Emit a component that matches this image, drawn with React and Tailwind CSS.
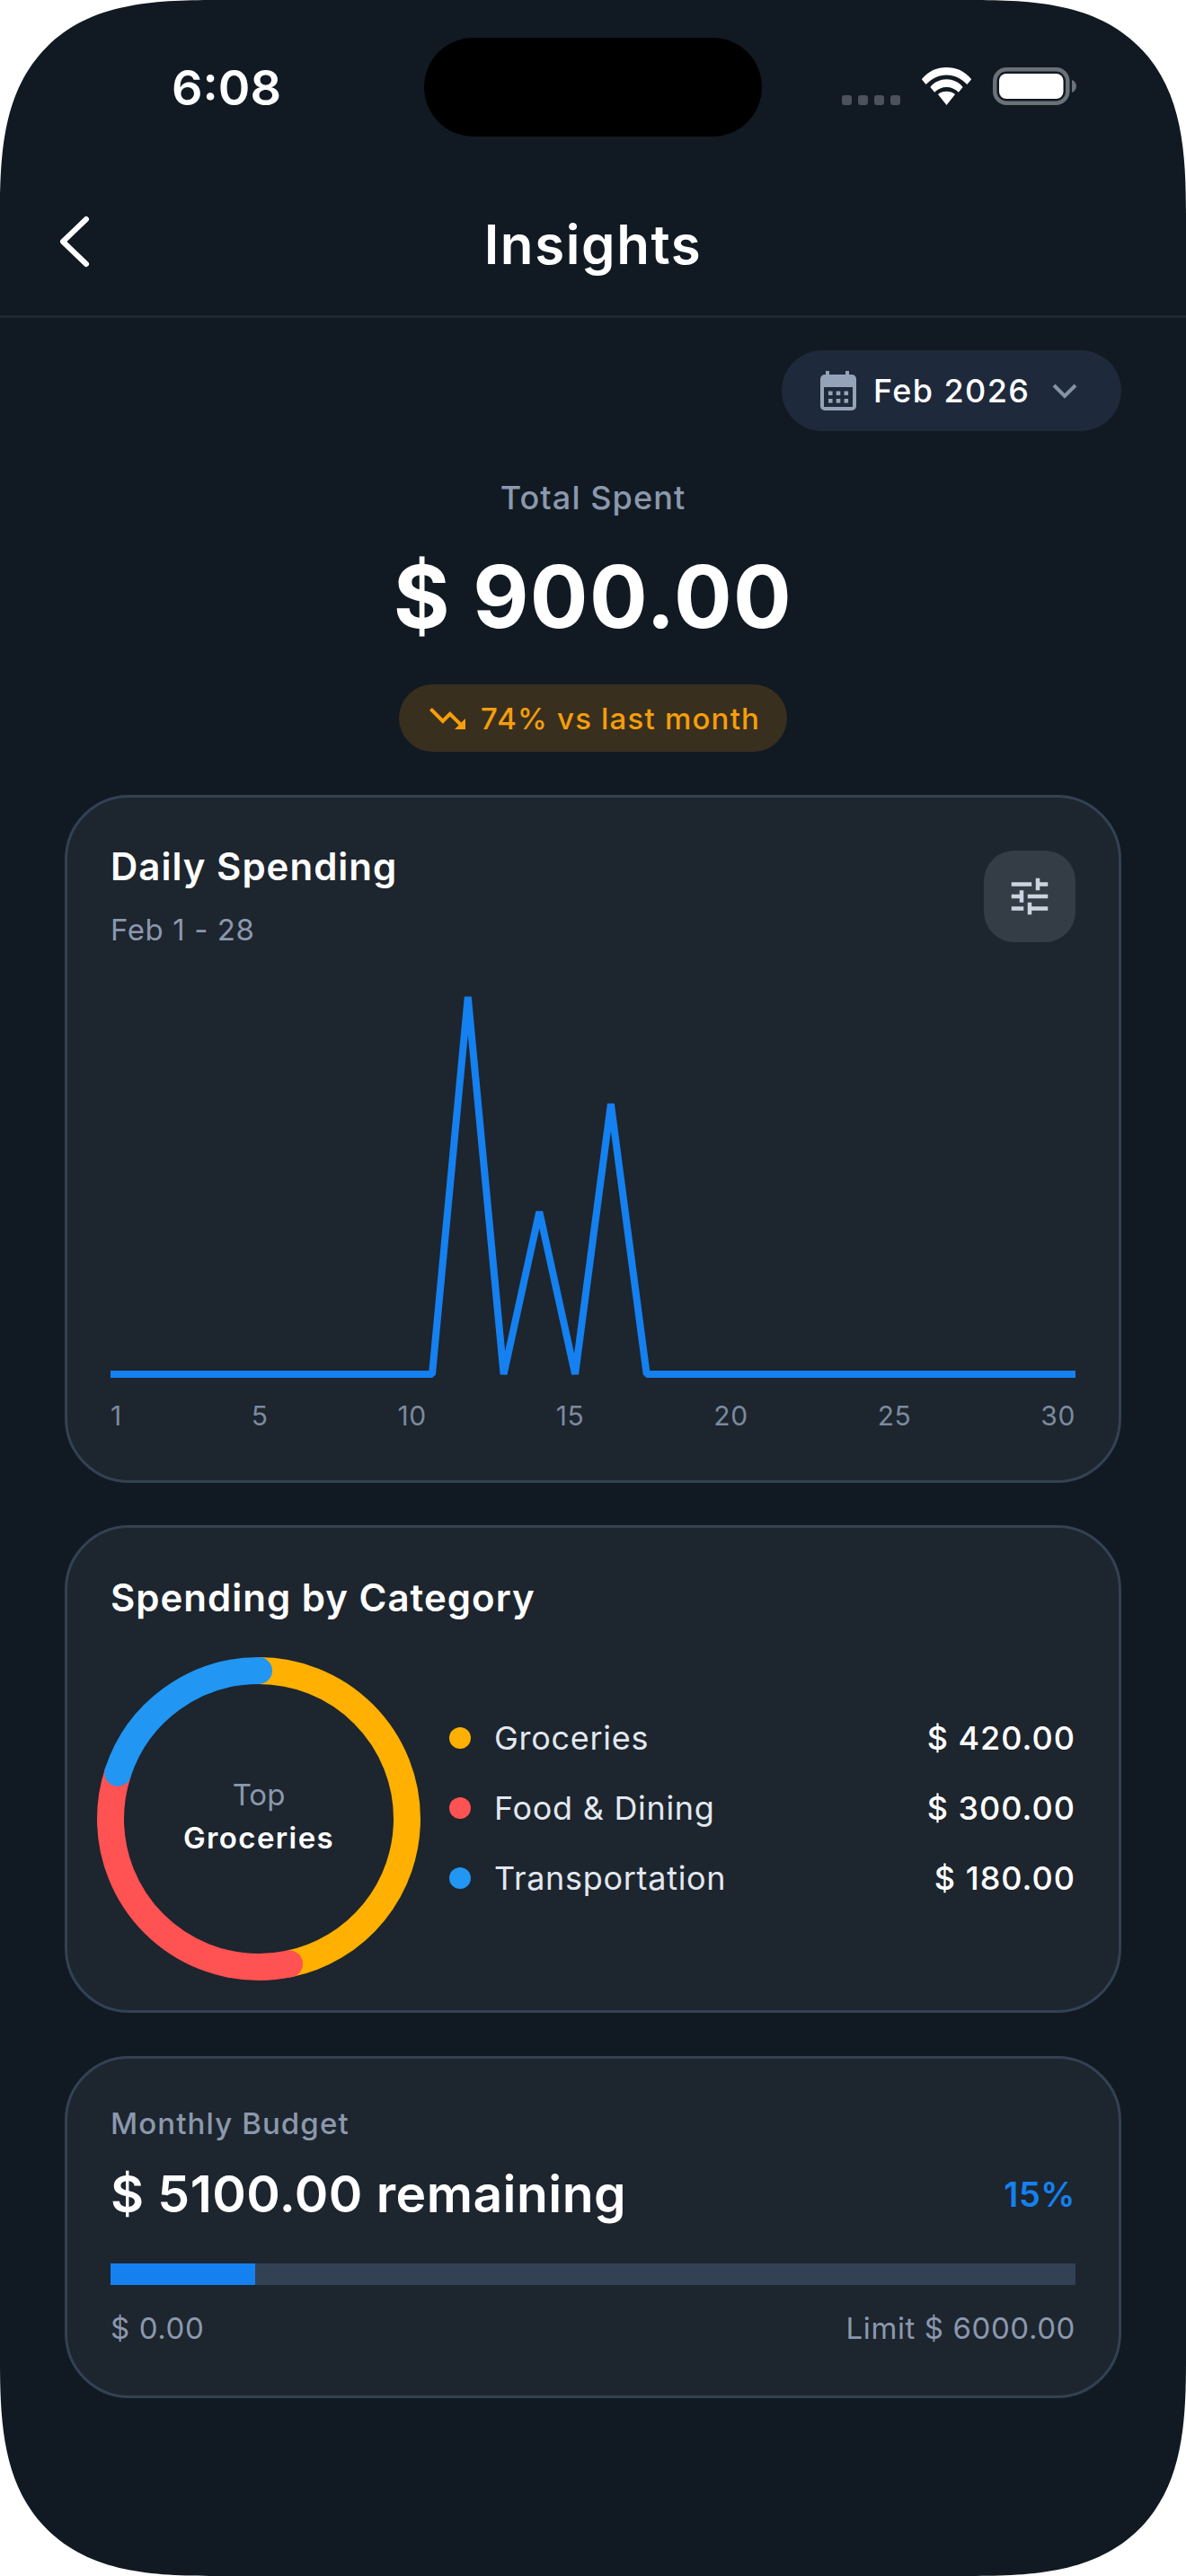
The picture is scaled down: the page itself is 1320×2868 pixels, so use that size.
import React from "react";
import { MdTune, MdTrendingDown } from "react-icons/md";

const inter = { fontFamily: "Inter, sans-serif" };

function Calendar() {
  return (
    <svg width="40" height="44" viewBox="0 0 40 44" className="shrink-0">
      <rect x="6" y="0" width="4" height="8" fill="#94a3b8" />
      <rect x="28" y="0" width="4" height="8" fill="#94a3b8" />
      <rect x="0" y="4" width="40" height="40" rx="5" fill="#94a3b8" />
      <rect x="4" y="18" width="32" height="22" fill="#1e293b" />
      {[9, 17.7, 26.5].map((x) =>
        [22.5, 31].map((y) => <rect key={x + "-" + y} x={x} y={y} width="4.6" height="4.6" fill="#94a3b8" />)
      )}
    </svg>
  );
}

function Card({ className, children }) {
  return (
    <div className={"mx-[72px] w-[1176px] rounded-[72px] border-[3px] border-[#334155] bg-[#1d252e] px-[48px] " + className}>
      {children}
    </div>
  );
}

function Donut() {
  const r = 165;
  const c = 2 * Math.PI * r;
  const segs = [
    ["#ffb000", 0, 168],
    ["#ff5252", 168, 288],
    ["#2196f3", 288, 360],
  ];
  return (
    <div className="relative h-[360px] w-[360px] shrink-0">
      <svg width="360" height="360" viewBox="0 0 360 360" className="-rotate-90">
        {segs.map(([col, a, b]) => (
          <circle
            key={col}
            cx="180"
            cy="180"
            r={r}
            fill="none"
            stroke={col}
            strokeWidth="30"
            strokeLinecap="round"
            strokeDasharray={`${(c * (b - a)) / 360} ${c}`}
            strokeDashoffset={(-c * a) / 360}
          />
        ))}
      </svg>
      <div className="absolute inset-0 flex flex-col items-center justify-center pb-[5px]">
        <div className="text-[33px] leading-[44px] text-[#8b98ad]">Top</div>
        <div className="mt-[3px] text-[33px] leading-[46px] font-semibold tracking-[1.4px] text-white">Groceries</div>
      </div>
    </div>
  );
}

const pts = Array.from({ length: 28 }, (_, i) => {
  const x = (1074 / 27) * i;
  const tops = { 10: 0, 12: 239, 14: 119 };
  const y = i in tops ? tops[i] : 420;
  return `${x.toFixed(1)},${y}`;
}).join(" ");

export default function App() {
  return (
    <div className="h-[2868px] w-[1320px] bg-white" style={inter}>
      <div className="relative h-[2868px] w-[1320px] overflow-hidden rounded-[240px] bg-[#111a22] text-white [corner-shape:superellipse(1.5)]">
        {/* status bar */}
        <div className="relative flex h-[192px] items-start justify-between">
          <div className="ml-[191px] mt-[68px] text-[54px] leading-[60px] font-semibold">6:08</div>
          <div className="absolute left-[472px] top-[42px] h-[110px] w-[376px] rounded-[55px] bg-black" />
          <div className="absolute left-[937px] top-[106px] flex gap-[7px]">
            {[0, 1, 2, 3].map((i) => (
              <div key={i} className="h-[11px] w-[11px] rounded-[3px] bg-[#4b525b]" />
            ))}
          </div>
          <svg className="absolute left-[1025px] top-[75px]" width="57" height="42" viewBox="0 0 58 44">
            <path d="M29 0C18 0 8 4 0 14l5 6C12 13 20 9 29 9s17 4 24 11l5-6C50 4 40 0 29 0z" fill="#fff" />
            <path d="M29 14c-7 0-14 3-19 9l5 6c4-4 9-6 14-6s10 2 14 6l5-6c-5-6-12-9-19-9z" fill="#fff" />
            <path d="M29 28c-4 0-7 1-10 3.500L29 44l10-12.500c-3-2.500-6-3.500-10-3.500z" fill="#fff" />
          </svg>
          <svg className="absolute left-[1105px] top-[75px]" width="94" height="42" viewBox="0 0 94 42">
            <rect x="2.250" y="2.250" width="81" height="37.500" rx="13" fill="none" stroke="#6b7178" strokeWidth="4.500" />
            <rect x="7" y="7" width="71.500" height="28" rx="8" fill="#fff" />
            <path d="M88 14c3 1 5 4 5 7s-2 6-5 7z" fill="#6b7178" />
          </svg>
        </div>

        {/* header */}
        <div className="relative flex h-[162px] items-start justify-center border-b-[3px] border-[#1e2833]">
          <svg className="absolute left-[64px] top-[48px]" width="38" height="58" viewBox="0 0 38 58">
            <path d="M32 4 L6 29 L32 54" fill="none" stroke="#fff" strokeWidth="6" strokeLinecap="round" strokeLinejoin="round" />
          </svg>
          <div className="mt-[48px] text-[60px] leading-[64px] font-semibold tracking-[1.6px]">Insights</div>
        </div>

        {/* month pill */}
        <div className="mt-[36px] flex justify-end pr-[72px]">
          <div className="flex h-[90px] w-[378px] items-center rounded-[45px] bg-[#1e293b] pl-[43px]">
            <Calendar />
            <span className="ml-[19px] text-[36px] leading-[48px] font-medium tracking-[1.4px]">Feb 2026</span>
            <svg className="ml-[25px]" width="28" height="18" viewBox="0 0 28 18">
              <path d="M2 3 L14 15 L26 3" fill="none" stroke="#8492a6" strokeWidth="4" />
            </svg>
          </div>
        </div>

        {/* total */}
        <div className="mt-[50px] flex flex-col items-center">
          <div className="text-[36px] leading-[48px] font-medium tracking-[1.1px] text-[#8b98ad]">Total Spent</div>
          <div className="mt-[31px] text-[96px] leading-[110px] font-bold tracking-[1.4px]">$ 900.00</div>
          <div className="mt-[43px] flex h-[75px] w-[432px] items-center rounded-[38px] bg-[#382f1f] pl-[30px] text-[#f59e0b]">
            <MdTrendingDown size={48} className="shrink-0" />
            <span className="ml-[13px] text-[33px] leading-[44px] font-medium tracking-[1.2px]">74% vs last month</span>
          </div>
        </div>

        {/* daily */}
        <Card className="relative mt-[48px] h-[766px] pt-[49px]">
          <div className="text-[42px] leading-[56px] font-semibold tracking-[1px]">Daily Spending</div>
          <div className="mt-[20px] text-[33px] leading-[44px] tracking-[0.6px] text-[#8b98ad]">Feb 1 - 28</div>
          <div className="absolute right-[48px] top-[59px] flex h-[102px] w-[102px] items-center justify-center rounded-[34px] bg-[#343c46]">
            <MdTune size={54} color="#cbd5e1" />
          </div>
          <svg className="mt-[53px] block overflow-visible" width="1074" height="424" viewBox="0 0 1074 424">
            <polyline points={pts} fill="none" stroke="#1580ef" strokeWidth="8" strokeLinejoin="bevel" />
          </svg>
          <div className="mt-[22px] flex justify-between text-[30px] leading-[40px] tracking-[0.6px] text-[#7b8a9e]">
            <span>1</span>
            <span>5</span>
            <span>10</span>
            <span>15</span>
            <span>20</span>
            <span>25</span>
            <span>30</span>
          </div>
        </Card>

        {/* category */}
        <Card className="mt-[47px] h-[543px] pt-[50px]">
          <div className="text-[42px] leading-[56px] font-semibold tracking-[1px]">Spending by Category</div>
          <div className="ml-[-15px] mt-[38px] flex items-center">
            <Donut />
            <div className="mb-[25px] ml-[32px] flex flex-1 flex-col gap-[26px]">
              {[
                ["#ffb000", "Groceries", "$ 420.00"],
                ["#ff5252", "Food & Dining", "$ 300.00"],
                ["#2196f3", "Transportation", "$ 180.00"],
              ].map(([c, n, v]) => (
                <div key={n} className="flex h-[52px] items-center">
                  <div className="h-[24px] w-[24px] rounded-full" style={{ backgroundColor: c }} />
                  <span className="ml-[26px] text-[36px] tracking-[0.7px] text-[#e2e8f0]">{n}</span>
                  <span className="ml-auto text-[36px] font-medium tracking-[1px]">{v}</span>
                </div>
              ))}
            </div>
          </div>
        </Card>

        {/* budget */}
        <Card className="mt-[48px] h-[381px] pt-[50px]">
          <div className="text-[33px] leading-[44px] font-medium tracking-[1.1px] text-[#8b98ad]">Monthly Budget</div>
          <div className="mt-[23px] flex items-center justify-between">
            <span className="text-[57px] leading-[68px] font-semibold tracking-[0.45px]">$ 5100.00 remaining</span>
            <span className="text-[38px] font-semibold tracking-[0.5px] text-[#1580ef]">15%</span>
          </div>
          <div className="mt-[43px] h-[24px] bg-[#334155]">
            <div className="h-full bg-[#1580ef]" style={{ width: "15%" }} />
          </div>
          <div className="mt-[26px] flex justify-between text-[33px] leading-[44px] tracking-[0.6px] text-[#8b98ad]">
            <span>$ 0.00</span>
            <span>Limit $ 6000.00</span>
          </div>
        </Card>
      </div>
    </div>
  );
}
